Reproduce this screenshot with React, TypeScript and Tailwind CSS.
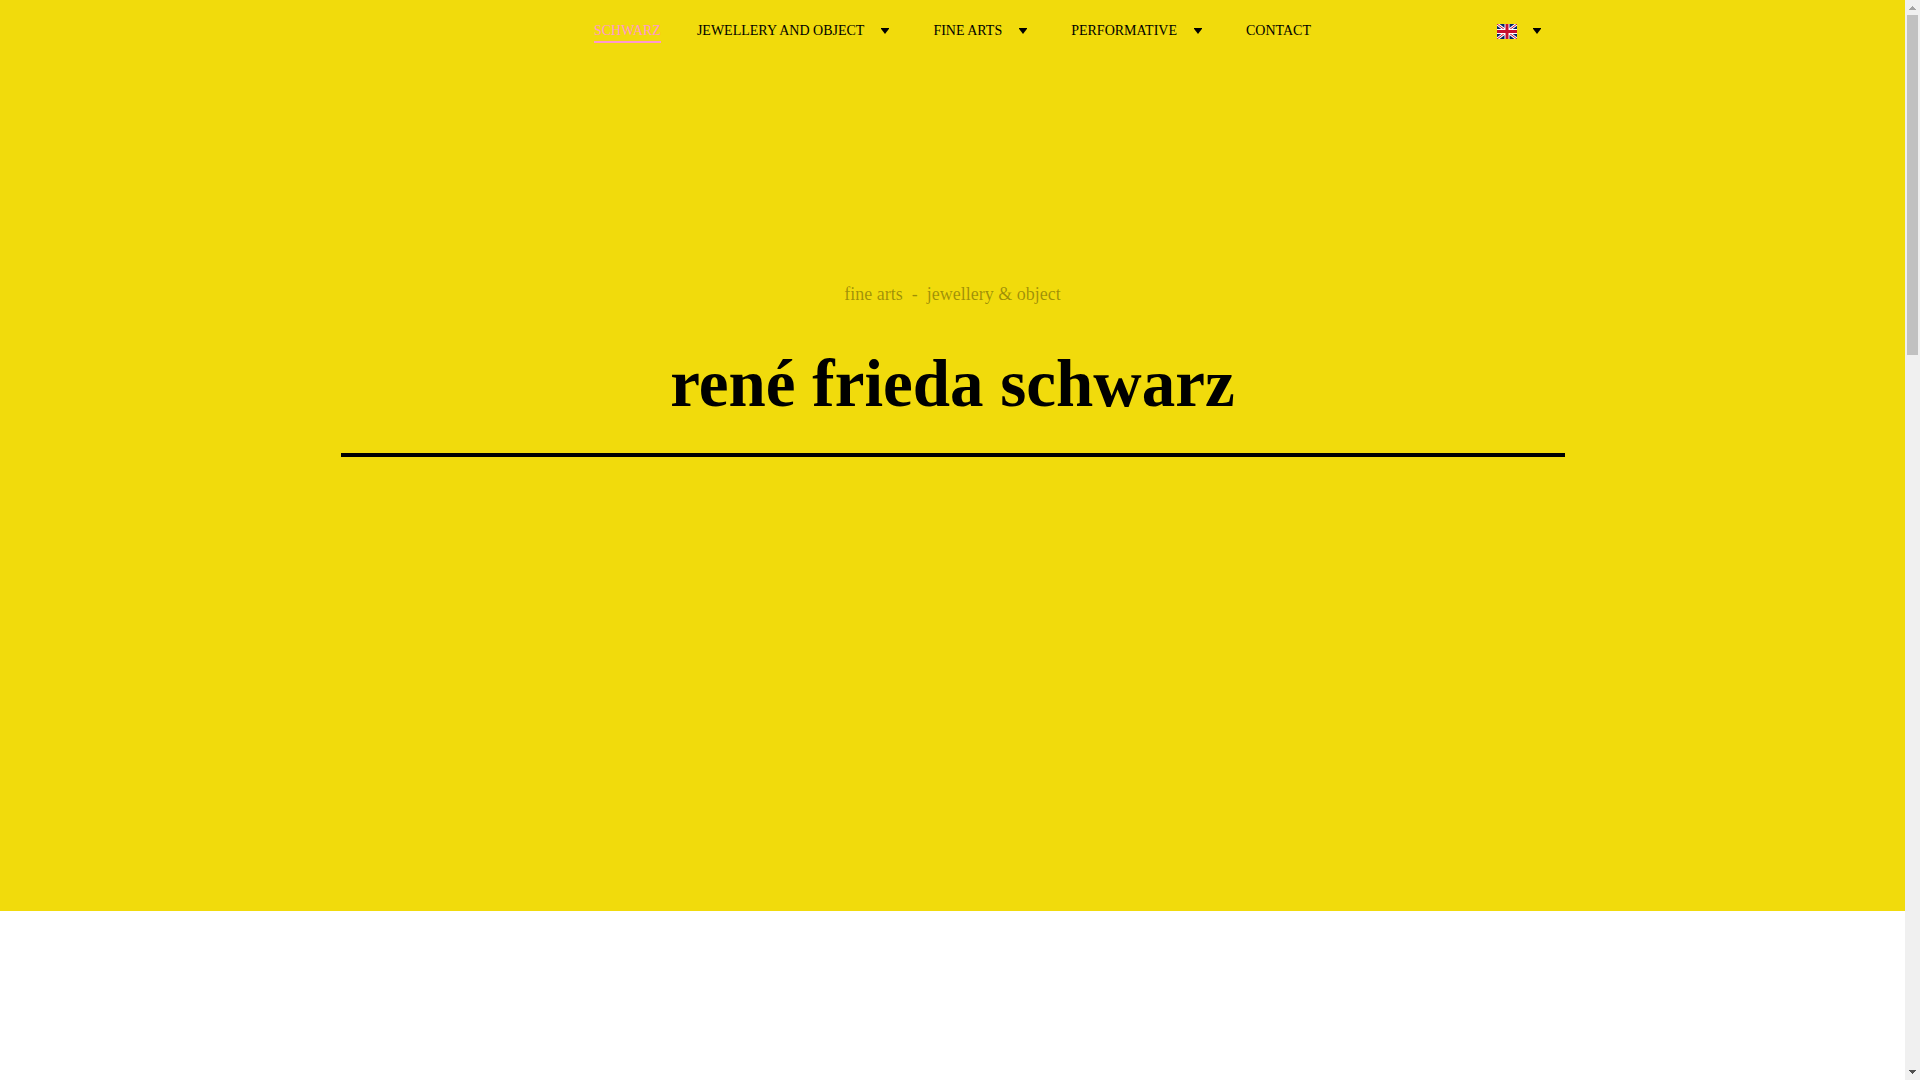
type NavItem = { label: string; href: string; active?: boolean; submenu?: boolean };

const navItems: NavItem[] = [
  { label: 'SCHWARZ', href: '#schwarz', active: true },
  { label: 'JEWELLERY AND OBJECT', href: '#jewellery', submenu: true },
  { label: 'FINE ARTS', href: '#fine-arts', submenu: true },
  { label: 'PERFORMATIVE', href: '#performative', submenu: true },
  { label: 'CONTACT', href: '#contact' },
];

function Caret() {
  return (
    <svg className="h-[6px] w-[8px] shrink-0" viewBox="0 0 8 6" fill="currentColor">
      <path d="M0 0h8v.8L4 6 0 .8z" />
    </svg>
  );
}

function UnionJack() {
  return (
    <svg className="h-[15px] w-5" viewBox="0 0 20 15">
      <rect width="20" height="15" fill="#012169" />
      <path d="M0 0l20 15M20 0L0 15" stroke="#fff" strokeWidth="3" />
      <path d="M0 0l20 15M20 0L0 15" stroke="#c8102e" strokeWidth="1" />
      <path d="M10 0v15M0 7.5h20" stroke="#fff" strokeWidth="5" />
      <path d="M10 0v15M0 7.5h20" stroke="#c8102e" strokeWidth="3" />
    </svg>
  );
}

function Header() {
  return (
    <header className="mx-auto grid h-[62px] w-full max-w-[1224px] grid-cols-[1fr_auto_1fr] items-center">
      <nav className="col-start-2 flex items-center gap-9 text-sm leading-5">
        {navItems.map((item) => (
          <div key={item.label} className="flex items-center">
            <a
              href={item.href}
              className={item.active ? 'border-y-2 border-t-transparent border-b-[#ff99cc] text-[#ff99cc]' : ''}
            >
              {item.label}
            </a>
            {item.submenu && (
              <button aria-label={`${item.label} submenu`} className="pr-2 pl-[17px]">
                <Caret />
              </button>
            )}
          </div>
        ))}
      </nav>
      <button aria-label="Language" className="mr-6 flex items-center gap-4 justify-self-end">
        <UnionJack />
        <Caret />
      </button>
    </header>
  );
}

function Scrollbar() {
  return (
    <div className="flex w-[15px] shrink-0 flex-col items-center justify-between bg-[#f0f0f0]" aria-hidden="true">
      <div className="flex w-full flex-col items-center">
        <div className="flex h-[15px] items-center">
          <svg className="h-1 w-[7px]" viewBox="0 0 7 4" fill="#a3a3a3" shapeRendering="crispEdges">
            <path d="M3 0h1v1h1v1h1v1h1v1H0V3h1V2h1V1h1z" />
          </svg>
        </div>
        <div className="h-[340px] w-[11px] bg-[#c1c1c1]" />
      </div>
      <div className="flex h-4 items-center">
        <svg className="h-1 w-[7px]" viewBox="0 0 7 4" fill="#505050" shapeRendering="crispEdges">
          <path d="M0 0h7v1H6v1H5v1H4v1H3V3H2V2H1V1H0z" />
        </svg>
      </div>
    </div>
  );
}

export default function App() {
  return (
    <div className="flex min-h-screen bg-white font-['Liberation_Serif',serif] text-black">
      <div className="min-w-0 flex-1">
        <section className="bg-[#f1db0c] pb-[454px]">
          <Header />
          <div className="mx-auto max-w-[1224px] text-center">
            <p className="pt-[220px] text-lg leading-6 whitespace-pre text-black/35">fine arts  -  jewellery &amp; object</p>
            <h1 className="mt-10 text-[67px] leading-[74px] font-bold">rené frieda schwarz</h1>
            <hr className="mt-[33px] border-0 border-t-4 border-black" />
          </div>
        </section>
      </div>
      <Scrollbar />
    </div>
  );
}
